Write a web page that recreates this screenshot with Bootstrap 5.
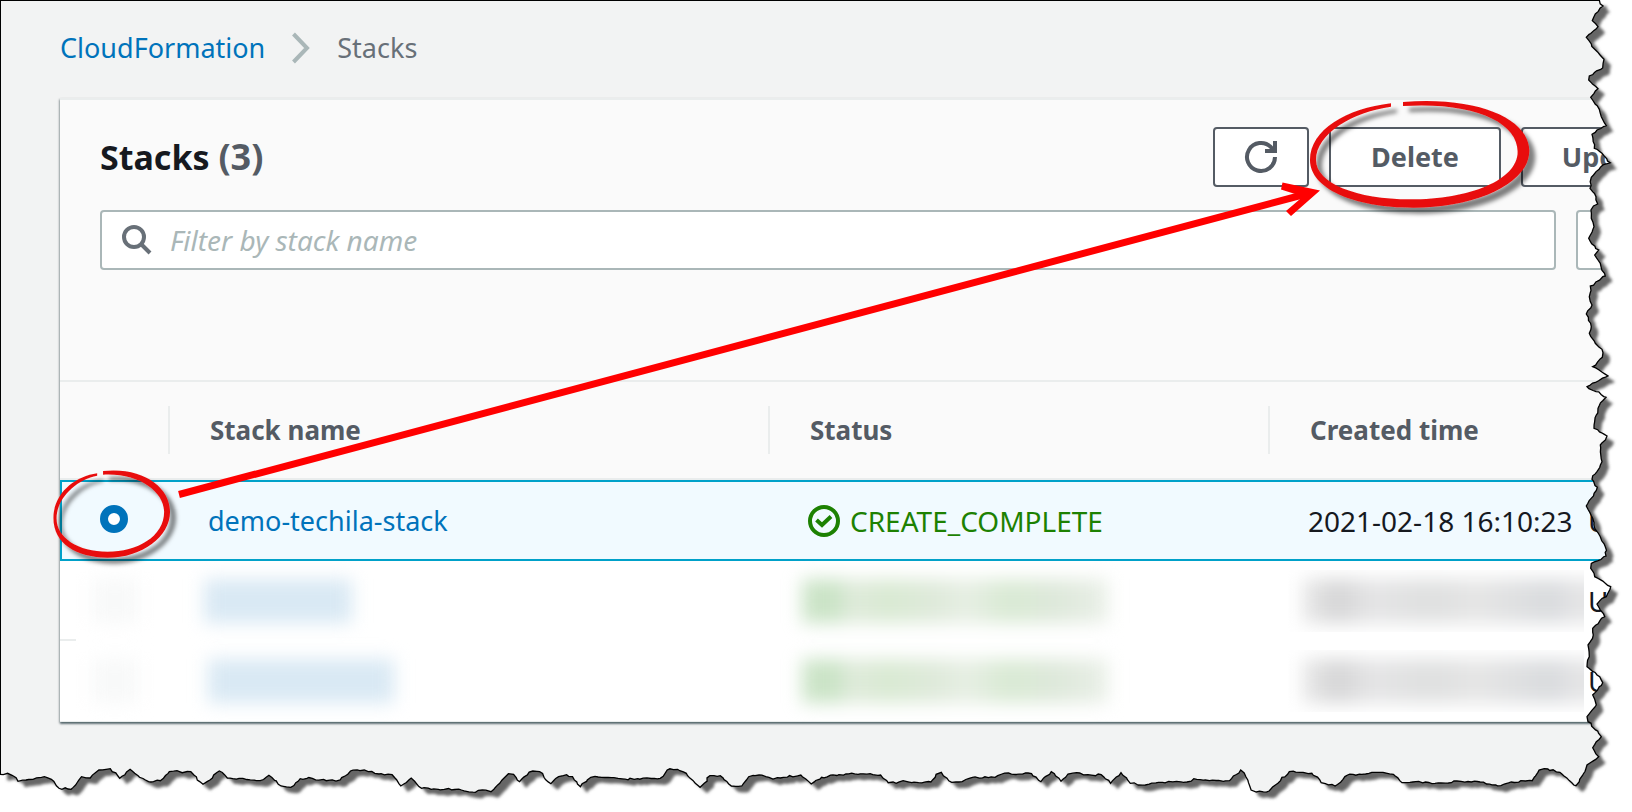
<!DOCTYPE html>
<html lang="en">
<head>
<meta charset="utf-8">
<meta name="viewport" content="width=device-width, initial-scale=1">
<title>CloudFormation - Stacks</title>
<link href="https://cdn.jsdelivr.net/npm/bootstrap@5.3.0/dist/css/bootstrap.min.css" rel="stylesheet">
<style>
  body { font-family: "Noto Sans", "Open Sans", sans-serif; font-size: 27px; line-height: 36px; color: #16191f; background: #f2f3f3; }
  a { color: #0073bb; text-decoration: none; }
  .console { border-top: 1px solid #000; border-left: 1px solid #000; padding-left: 59px; }
  .crumbs { height: 97px; padding-bottom: 4px; gap: 27px; color: #687078; }
  .stack-panel { margin-right: -109px; background: #fff; border-top: 2px solid #eaeded; border-bottom: 1px solid #eaeded;
    box-shadow: 0 2px 2px rgba(0,28,36,.5), 1px 1px 2px rgba(0,28,36,.2), -1px 1px 2px rgba(0,28,36,.2); }
  .panel-top { background: #fafafa; padding: 27px 40px 110px; }
  .panel-top h1 { font-size: 34px; line-height: 44px; }
  .count { color: #545b64; font-size: 36px; }
  .actions { gap: 20px; }
  .actions .btn { height: 60px; padding: 0; border: 2px solid #545b64; border-radius: 4px; background: #fff; color: #545b64; font-size: 27px; font-weight: 700; }
  .w-refresh { width: 96px; }
  .w-delete { width: 172px; }
  .w-update { width: 180px; }
  .filters { gap: 20px; margin-top: 23px; }
  .search-box { height: 60px; border: 2px solid #aab7b8; border-radius: 4px; background: #fff; padding-left: 20px; gap: 18px; }
  .search-box .form-control { border: 0; padding: 0; background: transparent; font-size: 28px; box-shadow: none; }
  .search-box .form-control::placeholder { color: #aab7b8; font-style: italic; opacity: 1; }
  .filters .form-select { width: 125px; border: 2px solid #aab7b8; border-radius: 4px; background-color: #fff; }
  .stack-table { table-layout: fixed; width: 100%; border-collapse: separate; border-spacing: 0; }
  .stack-table th { height: 100px; padding: 0; background: #fafafa; border-top: 2px solid #eaeded; border-bottom: 2px solid #eaeded; color: #545b64; font-size: 26px; font-weight: 700; }
  .stack-table th > div { height: 48px; padding-left: 40px; border-left: 2px solid #eaeded; display: flex; align-items: center; }
  .stack-table td { height: 80px; padding: 0 0 0 40px; white-space: nowrap; }
  .stack-table .picked td { height: 81px; background: #f1faff; border-top: 2px solid #00a1c9; border-bottom: 2px solid #00a1c9; }
  .stack-table .picked td:first-child { border-left: 2px solid #00a1c9; padding: 0 0 3px 38px; }
  .stack-table .ruled td:first-child { background: linear-gradient(#eaeded, #eaeded) left bottom / 16px 2px no-repeat; }
  .col-pick { width: 108px; } .col-name { width: 600px; } .col-status { width: 500px; }
  .pick-radio { appearance: none; width: 28px; height: 28px; margin: 0; display: block; border: 8px solid #0073bb; border-radius: 50%; background: #fff; }
  .status-ok { color: #1d8102; font-size: 28px; gap: 10px; }
  .stamp { font-size: 28px; }
  .stamp-date { width: 280px; flex: none; }
  .hidden-cell { display: block; height: 44px; filter: blur(9px); }
  .hide-pick { width: 46px; margin-left: -8px; background: #f8f9f9; }
  .hide-name { width: 148px; margin-left: -4px; background: #d9e9f4; }
  .hide-long { width: 186px; margin-left: 0; }
  .hide-status { width: 306px; margin-left: -6px; background: linear-gradient(90deg, #cbe4c7 0 36px, #e0ebdc 48px, #d9ead3 85px, #dfeadb 135px, #e7efe4 165px, #d9ead4 205px, #dfe9dc 260px, #eaf0e8); }
  .hide-time-wrap { width: 296px; margin-left: -20px; overflow: hidden; padding: 9px 0 9px 14px; flex: none; }
  .hide-time { width: 310px; background: linear-gradient(90deg, #eaeaea, #d5d5d6 35px, #e5e5e6 70px, #dfe0e0 130px, #e6e6e6 175px, #e0e1e2 210px, #d9dbde 250px, #e5e5e6 275px); }
  .zone { margin-left: 4px; }
  .notes { left: 0; top: 0; pointer-events: none; overflow: visible; }
</style>
</head>
<body class="overflow-hidden">
<div class="position-relative overflow-hidden min-vh-100">
<main class="console min-vh-100">
  <nav aria-label="breadcrumb" class="crumbs d-flex align-items-center">
    <a href="#">CloudFormation</a>
    <svg width="18" height="32" viewBox="0 0 18 32" fill="none" stroke="#aab7b8" stroke-width="4" aria-hidden="true"><path d="M1.5 2 15 16 1.5 30"/></svg>
    <span aria-current="page">Stacks</span>
  </nav>
  <section class="stack-panel">
    <div class="panel-top">
      <div class="d-flex align-items-center justify-content-between">
        <h1 class="fw-bold m-0">Stacks <span class="count">(3)</span></h1>
        <div class="actions d-flex">
          <button type="button" class="btn w-refresh d-flex align-items-center justify-content-center" aria-label="Refresh">
            <svg width="34" height="34" viewBox="0 0 34 34" fill="none" stroke="#545b64" stroke-width="4"><path d="M31 17A14 14 0 1 1 27 7.200L29 10"/><path d="M31 1V11H21"/></svg>
          </button>
          <button type="button" class="btn w-delete">Delete</button>
          <button type="button" class="btn w-update">Update</button>
        </div>
      </div>
      <div class="filters d-flex">
        <div class="search-box d-flex align-items-center flex-grow-1">
          <svg width="30" height="30" viewBox="0 0 30 30" fill="none" stroke="#687078" stroke-width="4" aria-hidden="true" class="flex-shrink-0"><circle cx="12" cy="12" r="10"/><path d="M19 19 28 28"/></svg>
          <input type="text" class="form-control" placeholder="Filter by stack name" aria-label="Filter by stack name">
        </div>
        <select class="form-select" aria-label="Stack state"><option></option></select>
      </div>
    </div>
    <table class="stack-table">
      <colgroup><col class="col-pick"><col class="col-name"><col class="col-status"><col></colgroup>
      <thead>
        <tr><th></th><th scope="col"><div>Stack name</div></th><th scope="col"><div>Status</div></th><th scope="col"><div>Created time</div></th></tr>
      </thead>
      <tbody>
        <tr class="picked">
          <td><input type="radio" class="pick-radio" name="stack" aria-label="Select demo-techila-stack" checked></td>
          <td><a href="#">demo-techila-stack</a></td>
          <td><div class="status-ok d-flex align-items-center">
            <svg width="32" height="32" viewBox="0 0 32 32" fill="none" stroke="#1d8102" stroke-width="4" aria-hidden="true"><circle cx="16" cy="16" r="14"/><path d="M8.500 15 14 20 23 11.500"/></svg>
            <span>CREATE_COMPLETE</span></div></td>
          <td class="stamp"><div class="d-flex"><span class="stamp-date">2021-02-18 16:10:23</span><span>UTC</span></div></td>
        </tr>
        <tr class="ruled">
          <td><span class="hidden-cell hide-pick"></span></td>
          <td><span class="hidden-cell hide-name"></span></td>
          <td><span class="hidden-cell hide-status"></span></td>
          <td class="stamp"><div class="d-flex align-items-center"><div class="hide-time-wrap"><span class="hidden-cell hide-time"></span></div><span class="zone">UTC</span></div></td>
        </tr>
        <tr>
          <td><span class="hidden-cell hide-pick"></span></td>
          <td><span class="hidden-cell hide-name hide-long"></span></td>
          <td><span class="hidden-cell hide-status"></span></td>
          <td class="stamp"><div class="d-flex align-items-center"><div class="hide-time-wrap"><span class="hidden-cell hide-time"></span></div><span class="zone">UTC</span></div></td>
        </tr>
      </tbody>
    </table>
  </section>
</main>

<svg class="notes position-absolute" width="1632" height="812" viewBox="0 0 1632 812" aria-hidden="true">
  <defs>
    <filter id="soft" x="-10%" y="-10%" width="120%" height="120%"><feGaussianBlur stdDeviation="1.5"/></filter>
    <filter id="drop" x="-20%" y="-20%" width="150%" height="150%"><feDropShadow dx="6" dy="6" stdDeviation="2" flood-color="#000" flood-opacity=".5"/></filter>
    <clipPath id="outside"><path id="outClip" clip-rule="evenodd"/></clipPath>
  </defs>
  <g filter="url(#drop)"><path fill="#e8110f" transform="translate(1180 80) scale(.3333)" d="M669 66C900 48 1048 120 1048 212C1048 310 890 383 700 383C520 383 390 325 390 240C390 150 500 85 633 70L633 80C520 95 408 160 408 240C408 310 530 358 690 358C870 358 1013 300 1013 215C1013 125 880 65 669 78Z"/></g>
  <g filter="url(#drop)"><path fill="#e8110f" transform="translate(0 370) scale(.347 .3333)" d="M297 303C410 290 490 350 490 425C490 500 410 563 310 563C220 563 154 520 154 445C154 370 215 320 280 310L280 317C220 328 163 385 163 445C163 505 225 545 310 545C395 545 473 500 473 425C473 365 400 308 297 314Z"/></g>
  <path d="M179 494.500 1308 193.500" stroke="#f00" stroke-width="7" fill="none"/>
  <path fill="#f00" d="M1282.500 182.500 1320 190.500 1291 216 1286 211 1303 196.500 1281 189.500Z"/>
  <path id="paper" fill="#fff" fill-rule="evenodd"/>
  <g clip-path="url(#outside)"><path id="shade" fill="#666" transform="translate(7 6)" filter="url(#soft)"/></g>
  <path id="rim" fill="none" stroke="#000" stroke-width="1.300"/>
</svg>
</div>
<script src="https://cdn.jsdelivr.net/npm/bootstrap@5.3.0/dist/js/bootstrap.bundle.min.js"></script>
<script>
  // Torn paper edge: runs of points, each with its origin and scale.
  const runs = [
    {x: 1552, y: 0, sx: 1/3, pts: [142,0,153,18,130,42,121,62,138,80,103,112,128,148,156,178,152,204,112,228,110,240,138,266,116,292,142,328,148,350,163,377,135,390,120,403,127,445,150,460,175,488,145,502,118,532,114,565,132,590,137,612,117,630,118,655,126,680,110,715,140,750,128,765,145,790,160,828,115,858,112,890,120,915,103,942,118,980,112,1000,130,1030,150,1048,151,1072,122,1100,168,1128,105,1160,162,1192]},
    {x: 1552, y: 400, sx: 1/3, pts: [152,2,133,45,126,85,165,108,145,135,150,185,135,215,120,238,136,262,103,318,122,355,128,385,145,410,160,440,162,468,118,490,116,505,128,530,176,560,163,590,135,612,158,650,122,685,124,705,108,735,112,770,105,800,135,825,152,848,122,885,133,915,105,950,108,965,148,1010,122,1043,140,1070,105,1095,82,1145,72,1157]}
  ];
  const bottom = [
    {x: 0, y: 740, sx: .347, pts: [0,103,22,100,35,106,52,124,75,120,95,118,128,110,148,118,170,145,205,148,218,135,235,110,260,114,285,90,318,86,345,115,360,104,375,88,402,112,435,126,462,122,488,95,510,92,525,98,550,95,585,133,605,120,632,93,655,114,700,115,750,122,775,106,810,138,838,142,865,116,900,115,940,122,980,120,1010,93,1050,90,1080,100,1130,104,1155,138,1185,114,1215,145,1280,148,1330,150,1370,157,1390,150,1415,155,1440,130,1465,101,1480,103,1497,125,1525,96,1555,95]},
    {x: 544, y: 740, sx: .347, pts: [0,112,20,131,42,110,65,104,82,110,105,140,135,112,185,112,260,118,335,115,355,90,385,88,410,100,450,142,462,130,478,107,508,107,540,138,570,138,590,110,620,105,660,117,690,112,740,105,770,132,800,112,870,102,905,103,940,101,970,105,992,128,1015,130,1035,122,1060,128,1115,126,1130,103,1145,97,1175,127,1195,126,1235,112,1300,112,1320,102,1405,101,1432,125,1462,95,1490,124,1510,102,1535,98]},
    {x: 1088, y: 740, sx: .347, pts: [0,104,38,104,65,130,95,98,122,130,165,135,215,127,255,124,285,126,305,116,350,122,408,122,440,90,455,110,470,150,485,156,522,153,540,135,580,95,620,97,645,100,672,128,712,138,748,105,800,102,850,97,880,103,905,128,945,125,1000,130,1075,124,1130,126,1190,137,1220,126,1280,122,1300,90,1325,87,1360,97,1400,135]}
  ];
  const place = list => list.flatMap(r => r.pts.reduce((a, v, i) => (i % 2 ? a[a.length - 1].push(r.y + v / 3) : a.push([r.x + v * r.sx]), a), []));
  const knots = [...place(runs), ...place(bottom).reverse()];
  const edge = [];
  let seed = 7;
  const noise = () => ((seed = seed * 16807 % 2147483647) / 2147483647 - .5) * 2;
  knots.forEach((p, i) => {
    edge.push(p);
    const q = knots[i + 1];
    if (!q) return;
    const n = Math.floor(Math.hypot(q[0] - p[0], q[1] - p[1]) / 3);
    for (let k = 1; k < n; k++) edge.push([p[0] + (q[0] - p[0]) * k / n + noise(), p[1] + (q[1] - p[1]) * k / n + noise()]);
  });
  const line = edge.map(p => p.map(v => v.toFixed(1)).join(' ')).join('L');
  const outer = 'M-9 -9H6000V6000H-9ZM-9 -9L' + edge[0][0] + ' -9L' + line + 'L-9 774Z';
  document.getElementById('outClip').setAttribute('d', outer);
  document.getElementById('paper').setAttribute('d', outer);
  document.getElementById('shade').setAttribute('d', 'M2 0L' + line + 'Z');
  document.getElementById('rim').setAttribute('d', 'M' + line);
</script>
</body>
</html>
